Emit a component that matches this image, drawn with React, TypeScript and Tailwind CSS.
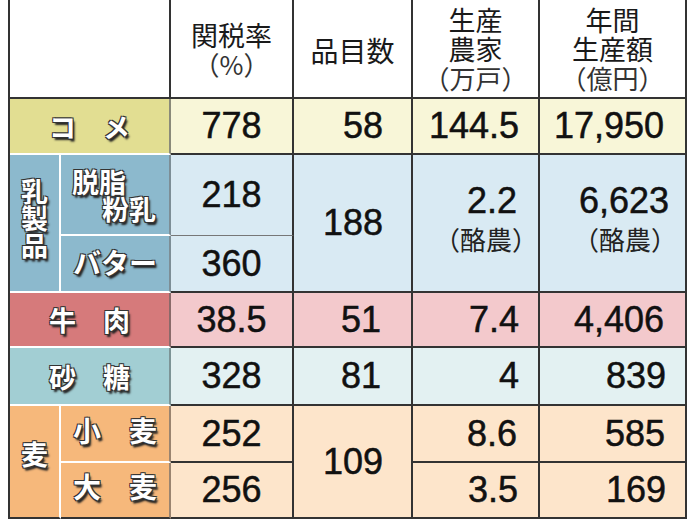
const jp = "font-['Noto_Sans_CJK_JP','Noto_Sans',sans-serif]";
const num =
  "font-['Liberation_Sans',Arial,sans-serif] text-[36px] leading-none text-[#111] [-webkit-text-stroke:0.5px_#111]";
const label =
  "font-['Noto_Sans_CJK_JP',sans-serif] font-bold text-white text-[27px] leading-none [text-shadow:-1px_-1px_0_#333,1px_-1px_0_#333,-1px_1px_0_#333,1px_1px_0_#333,2px_3px_2px_#222]";

const dark = "border-[#333]";
const head = `flex flex-col items-center justify-center bg-white border-r-2 border-b-2 ${dark} ${jp} text-[27px] leading-[29px] text-[#1a1a1a]`;
const paren = "text-[26px] text-[#333]";
const sub = `${jp} text-[26px] leading-[40px] text-[#222]`;

export default function App() {
  return (
    <div className="w-[696px] h-[522px] bg-white">
      <div className="ml-[8px] w-[679px] border-l-2 border-[#333] grid grid-cols-[51px_110px_123px_119px_127px_147px] grid-rows-[99px_56px_81px_57px_55px_58px_57px_56px]">
        {/* header */}
        <div className={`col-span-2 bg-white border-r-2 border-b-2 ${dark}`} />
        <div className={head}>
          <span>関税率</span>
          <span className={paren}>（%）</span>
        </div>
        <div className={head}>
          <span className="pt-1 text-[28px]">品目数</span>
        </div>
        <div className={head}>
          <span>生産</span>
          <span>農家</span>
          <span className={paren}>（万戸）</span>
        </div>
        <div className={head}>
          <span>年間</span>
          <span>生産額</span>
          <span className={paren}>（億円）</span>
        </div>

        {/* コメ */}
        <div className={`col-span-2 flex items-center justify-center bg-[#e2de92] border-b-2 border-b-white border-r-2 border-r-[#8a8a7a] ${label}`}>
          コ　メ
        </div>
        <div className={`flex items-center justify-center bg-[#f8f6d8] border-r-2 border-b-2 ${dark} ${num}`}>778</div>
        <div className={`flex items-center justify-end pr-[28px] bg-[#f8f6d8] border-r-2 border-b-2 ${dark} ${num}`}>58</div>
        <div className={`flex items-center justify-end pr-[19px] bg-[#f8f6d8] border-r-2 border-b-2 ${dark} ${num}`}>144.5</div>
        <div className={`flex items-center justify-end pr-[21px] bg-[#f8f6d8] border-r-2 border-b-2 ${dark} ${num}`}>17,950</div>

        {/* 乳製品 */}
        <div className={`row-span-2 flex flex-col items-center justify-center pb-3 bg-[#8cb9cd] border-r-2 border-r-white border-b-2 border-b-white ${label} text-[26px] leading-[28px]`}>
          <span>乳</span>
          <span>製</span>
          <span>品</span>
        </div>
        <div className={`flex flex-col justify-center pl-[11px] pr-[13px] bg-[#8cb9cd] border-b-2 border-b-white border-r-2 border-r-[#7d8e96] ${label} leading-[29px]`}>
          <span>脱脂</span>
          <span className="self-end">粉乳</span>
        </div>
        <div className={`flex items-center justify-center bg-[#d9eaf3] border-r-2 border-b border-r-[#333] border-b-[#777] ${num}`}>218</div>
        <div className={`row-span-2 flex items-center justify-end pr-[28px] bg-[#d9eaf3] border-r-2 border-b-2 ${dark} ${num}`}>188</div>
        <div className={`row-span-2 flex flex-col items-end justify-center pb-1 bg-[#d9eaf3] border-r-2 border-b-2 ${dark}`}>
          <span className={`${num} pr-[21px]`}>2.2</span>
          <span className={sub}>（酪農）</span>
        </div>
        <div className={`row-span-2 flex flex-col items-end justify-center pr-[8px] pb-1 bg-[#d9eaf3] border-r-2 border-b-2 ${dark}`}>
          <span className={`${num} pr-[8px]`}>6,623</span>
          <span className={sub}>（酪農）</span>
        </div>
        <div className={`flex items-center justify-center pb-1 bg-[#8cb9cd] border-b-2 border-b-white border-r-2 border-r-[#7d8e96] ${label} text-[28px]`}>
          バター
        </div>
        <div className={`flex items-center justify-center bg-[#d9eaf3] border-r-2 border-b-2 ${dark} ${num}`}>360</div>

        {/* 牛肉 */}
        <div className={`col-span-2 flex items-center justify-center bg-[#d67a7b] border-b-2 border-b-white border-r-2 border-r-[#8a6a6a] ${label}`}>
          牛　肉
        </div>
        <div className={`flex items-center justify-center bg-[#f3c9cc] border-r-2 border-b-2 ${dark} ${num}`}>38.5</div>
        <div className={`flex items-center justify-end pr-[30px] bg-[#f3c9cc] border-r-2 border-b-2 ${dark} ${num}`}>51</div>
        <div className={`flex items-center justify-end pr-[19px] bg-[#f3c9cc] border-r-2 border-b-2 ${dark} ${num}`}>7.4</div>
        <div className={`flex items-center justify-end pr-[21px] bg-[#f3c9cc] border-r-2 border-b-2 ${dark} ${num}`}>4,406</div>

        {/* 砂糖 */}
        <div className={`col-span-2 flex items-center justify-center bg-[#a2ced3] border-b-2 border-b-white border-r-2 border-r-[#7d9496] ${label}`}>
          砂　糖
        </div>
        <div className={`flex items-center justify-center bg-[#e3f1f2] border-r-2 border-b-2 ${dark} ${num}`}>328</div>
        <div className={`flex items-center justify-end pr-[30px] bg-[#e3f1f2] border-r-2 border-b-2 ${dark} ${num}`}>81</div>
        <div className={`flex items-center justify-end pr-[19px] bg-[#e3f1f2] border-r-2 border-b-2 ${dark} ${num}`}>4</div>
        <div className={`flex items-center justify-end pr-[19px] bg-[#e3f1f2] border-r-2 border-b-2 ${dark} ${num}`}>839</div>

        {/* 麦 */}
        <div className={`row-span-2 flex items-center justify-center pb-4 bg-[#f6b87b] border-r-2 border-r-white border-b-2 border-b-[#333] ${label}`}>
          麦
        </div>
        <div className={`flex items-center justify-center pb-2 bg-[#f6b87b] border-b-2 border-b-white border-r-2 border-r-[#9a8470] ${label} text-[28px]`}>
          小　麦
        </div>
        <div className={`flex items-center justify-center bg-[#fde5cb] border-r-2 border-b-2 ${dark} ${num}`}>252</div>
        <div className={`row-span-2 flex items-center justify-end pr-[28px] bg-[#fde5cb] border-r-2 border-b-2 ${dark} ${num}`}>109</div>
        <div className={`flex items-center justify-end pr-[21px] bg-[#fde5cb] border-r-2 border-b-2 ${dark} ${num}`}>8.6</div>
        <div className={`flex items-center justify-end pr-[20px] bg-[#fde5cb] border-r-2 border-b-2 ${dark} ${num}`}>585</div>
        <div className={`flex items-center justify-center pb-2 bg-[#f6b87b] border-b-2 border-b-[#333] border-r-2 border-r-[#9a8470] ${label} text-[28px]`}>
          大　麦
        </div>
        <div className={`flex items-center justify-center bg-[#fde5cb] border-r-2 border-b-2 ${dark} ${num}`}>256</div>
        <div className={`flex items-center justify-end pr-[20px] bg-[#fde5cb] border-r-2 border-b-2 ${dark} ${num}`}>3.5</div>
        <div className={`flex items-center justify-end pr-[19px] bg-[#fde5cb] border-r-2 border-b-2 ${dark} ${num}`}>169</div>
      </div>
    </div>
  );
}
